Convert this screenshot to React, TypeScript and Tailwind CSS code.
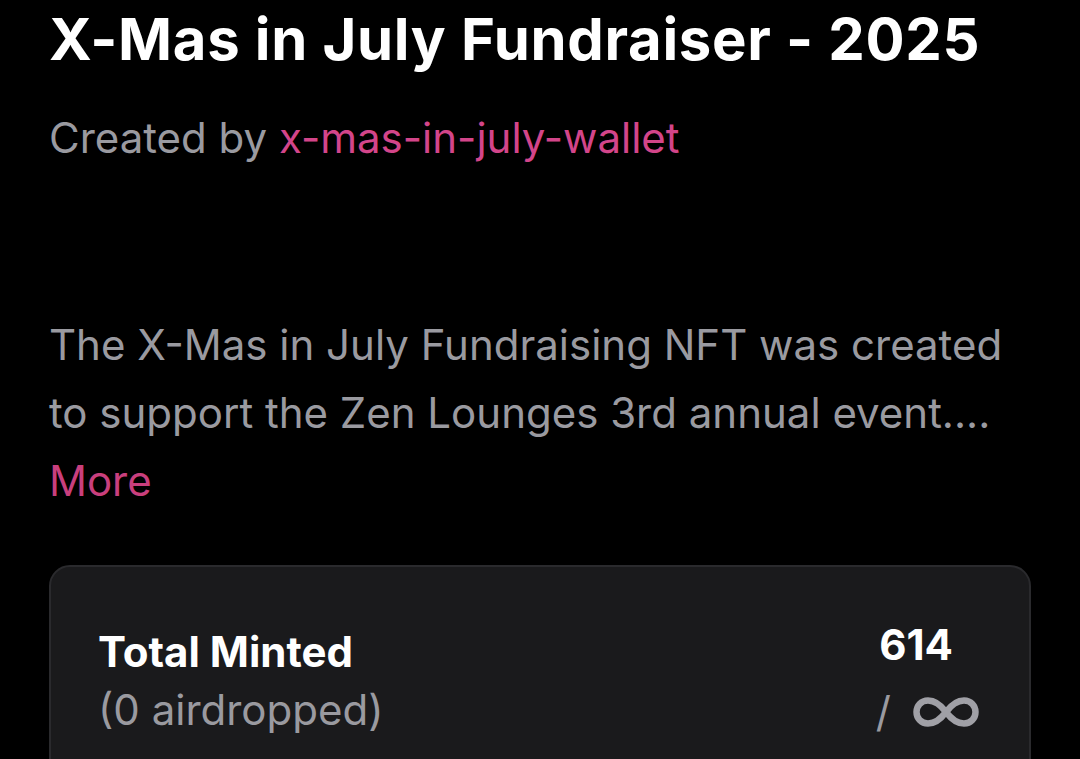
export default function App() {
  return (
    <div className="min-h-[759px] w-full overflow-hidden bg-black font-['Inter',sans-serif] text-white">
      <div className="px-[49px] pt-[7px]">
        <h1 className="text-[58px] font-bold leading-[64px] tracking-[0.7px] text-white">X-Mas in July Fundraiser - 2025</h1>
        <p className="mt-[38px] text-[42px] leading-[58px] text-[#9a9aa0]">
          Created by <span className="text-[#d3458a]">x-mas-in-july-wallet</span>
        </p>

        <p className="mt-[144px] text-[42px] leading-[68px] text-[#9a9aa0]">
          The X-Mas in July Fundraising NFT was created to support the Zen Lounges 3rd annual event....
        </p>
        <button className="block text-[42px] leading-[68px] text-[#c93f7d]">More</button>

        <div className="mt-[50px] rounded-[21px] border-2 border-[#2a2a2d] bg-[#1a1a1c] pb-[40px] pl-[47px] pr-[50px] pt-[56px]">
          <div className="flex items-start justify-between">
            <div>
              <p className="text-[42px] font-bold leading-[58px] text-white">Total Minted</p>
              <p className="text-[42px] leading-[58px] text-[#9a9aa0]">(0 airdropped)</p>
            </div>
            <div className="flex flex-col items-end">
              <p className="mr-[26px] text-[42px] font-bold leading-[44px] text-white">614</p>
              <p className="mt-[16px] flex h-[58px] items-center gap-[22px] text-[42px] leading-[58px] text-[#9a9aa0]">
                <span>/</span>
                <svg width="66" height="30" viewBox="0 0 66 30" fill="none" stroke="#a0a0a6" strokeWidth="6.5">
                  <path d="M33 15 C27 7 22 3.5 15 3.5 C8 3.5 3.5 9 3.5 15 C3.5 21 8 26.5 15 26.5 C22 26.5 27 23 33 15 C39 7 44 3.5 51 3.5 C58 3.5 62.5 9 62.5 15 C62.5 21 58 26.5 51 26.5 C44 26.5 39 23 33 15 Z" />
                </svg>
              </p>
            </div>
          </div>
        </div>
      </div>
    </div>
  );
}
